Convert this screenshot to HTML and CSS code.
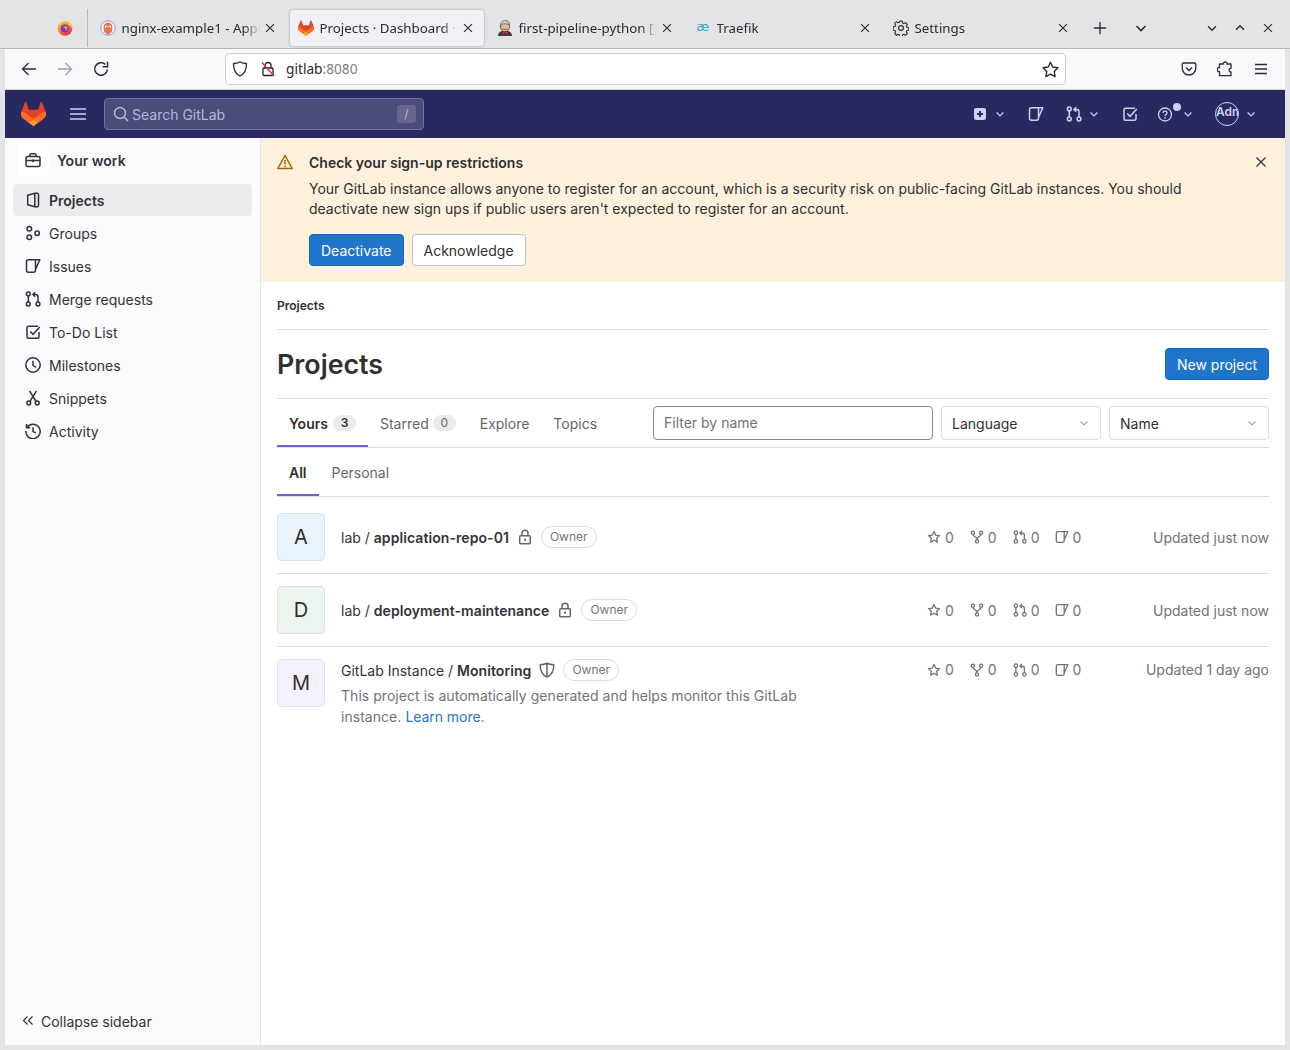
FILE: index.html
```html
<!DOCTYPE html>
<html>
	<head>
		<meta charset="utf-8">
		<title>Projects · Dashboard · GitLab</title>
		<link rel="stylesheet" href="styles.css">
	</head>
	<body>
		<svg class="icon-defs" width="0" height="0">
			<defs>
				<linearGradient id="fox" x1="0" y1="0" x2="0.6" y2="1">
					<stop offset="0" stop-color="#ffd53a"/>
					<stop offset=".5" stop-color="#ff8a2a"/>
					<stop offset="1" stop-color="#f0284f"/>
				</linearGradient>
			</defs>
			<symbol id="tanuki" viewBox="0 0 25 24">
				<path d="m24.507 9.5-.034-.09L21.082.562a.896.896 0 0 0-1.694.091l-2.29 7.01H7.825L5.535.653a.898.898 0 0 0-1.694-.09L.451 9.411.416 9.5a6.297 6.297 0 0 0 2.09 7.278l.012.01.03.022 5.16 3.867 2.56 1.935 1.554 1.176a1.051 1.051 0 0 0 1.268 0l1.555-1.176 2.56-1.935 5.197-3.89.014-.01A6.297 6.297 0 0 0 24.507 9.5Z" fill="#E24329"/>
				<path d="m24.507 9.5-.034-.09a11.44 11.44 0 0 0-4.56 2.051l-7.447 5.632 4.742 3.584 5.197-3.89.014-.01A6.297 6.297 0 0 0 24.507 9.5Z" fill="#FC6D26"/>
				<path d="m7.707 20.677 2.56 1.935 1.555 1.176a1.051 1.051 0 0 0 1.268 0l1.555-1.176 2.56-1.935-4.743-3.584-4.755 3.584Z" fill="#FCA326"/>
				<path d="M5.01 11.461a11.43 11.43 0 0 0-4.56-2.05L.416 9.5a6.297 6.297 0 0 0 2.09 7.278l.012.01.03.022 5.16 3.867 4.745-3.584-7.444-5.632Z" fill="#FC6D26"/>
			</symbol>
			<symbol id="i-close" viewBox="0 0 16 16"><path d="M3.500 3.500l9 9M12.500 3.500l-9 9" fill="none" stroke="currentColor" stroke-width="1.300"/></symbol>
			<symbol id="i-chevron" viewBox="0 0 16 16"><path d="M3.500 6l4.500 4.500L12.500 6" fill="none" stroke="currentColor" stroke-width="1.600"/></symbol>
			<symbol id="i-project" viewBox="0 0 16 16"><path d="M2.700 3.300L9.800 1.300h2.400c.8 0 1.300.5 1.300 1.300v10.800c0 .8-.5 1.300-1.300 1.300H9.800l-7.100-2zM9.800 1.300v13.400" fill="none" stroke="currentColor" stroke-width="1.500" stroke-linejoin="round"/></symbol>
			<symbol id="i-group" viewBox="0 0 16 16"><g fill="none" stroke="currentColor" stroke-width="1.500"><circle cx="4.300" cy="3.800" r="2.300"/><circle cx="4.300" cy="12.200" r="2.300"/><circle cx="12.200" cy="8.300" r="2.200"/></g></symbol>
			<symbol id="i-issue" viewBox="0 0 16 16"><path d="M3.300 1.800H14.800L10.500 11.500V12.200c0 1.200-.8 2-2 2H3.300c-1.200 0-1.800-.8-1.800-2V3.600c0-1.200.6-1.800 1.800-1.800zM10.500 1.800V11.500" fill="none" stroke="currentColor" stroke-width="1.500" stroke-linejoin="round"/></symbol>
			<symbol id="i-merge" viewBox="0 0 16 16"><g fill="none" stroke="currentColor" stroke-width="1.500"><circle cx="3.300" cy="3" r="1.900"/><circle cx="3.300" cy="13" r="1.900"/><circle cx="13" cy="13" r="1.900"/><path d="M3.300 4.900v6.200M13 11.100V6c0-1.500-.8-2.500-2.300-2.500H8M10.200 1.200L7.900 3.500l2.300 2.300"/></g></symbol>
			<symbol id="i-todo" viewBox="0 0 16 16"><path d="M14 8v4.700c0 .9-.6 1.500-1.500 1.500h-9c-.9 0-1.500-.6-1.500-1.500v-9C2 2.800 2.600 2.200 3.500 2.200H13M5.200 7.500L8 10.300l6.800-7.300" fill="none" stroke="currentColor" stroke-width="1.500"/></symbol>
			<symbol id="i-clock" viewBox="0 0 16 16"><g fill="none" stroke="currentColor" stroke-width="1.500"><circle cx="8" cy="8" r="7.200"/><path d="M8 3.800v4.500l3.200 2.200"/></g></symbol>
			<symbol id="i-snippet" viewBox="0 0 16 16"><g fill="none" stroke="currentColor" stroke-width="1.500"><circle cx="3.800" cy="13" r="1.900"/><circle cx="12.200" cy="13" r="1.900"/><path d="M4.900 11.500L11.500.8M11.100 11.500L4.500.8"/></g></symbol>
			<symbol id="i-history" viewBox="0 0 16 16"><g fill="none" stroke="currentColor" stroke-width="1.500"><path d="M2.200 4.200A7.200 7.200 0 1 1 .8 8M1.500 1v3.700h3.700M8 4.300v4l2.800 1.800"/></g></symbol>
			<symbol id="i-star" viewBox="0 0 16 16"><path d="M8 1.800l1.900 4 4.400.6-3.200 3 .8 4.400L8 11.700l-3.900 2.100.8-4.400-3.200-3 4.400-.6z" fill="none" stroke="currentColor" stroke-width="1.500" stroke-linejoin="round"/></symbol>
			<symbol id="i-fork" viewBox="0 0 16 16"><g fill="none" stroke="currentColor" stroke-width="1.500"><circle cx="3.300" cy="3" r="1.800"/><circle cx="12.700" cy="3" r="1.800"/><circle cx="8" cy="13" r="1.800"/><path d="M3.300 4.800c0 2.700 4.700 2.700 4.700 6.400M12.700 4.800c0 2.700-4.700 2.700-4.700 6.400"/></g></symbol>
			<symbol id="i-lock" viewBox="0 0 16 16"><g fill="none" stroke="currentColor" stroke-width="1.500"><rect x="2.700" y="6.700" width="10.600" height="8" rx="1"/><path d="M5 6.700V4.300a3 3 0 0 1 6 0v2.400"/></g><rect x="7" y="9.700" width="2" height="2" fill="currentColor"/></symbol>
			<symbol id="i-shield" viewBox="0 0 16 16"><path d="M8 1.200c2.200 1 4.400 1.500 6.800 1.500 0 6.300-1.900 10.300-6.800 12.300C3.100 13 1.200 9 1.200 2.700c2.400 0 4.600-.5 6.800-1.500zM8 1.200V15" fill="none" stroke="currentColor" stroke-width="1.500" stroke-linejoin="round"/></symbol>
		</svg>

		<div class="tabbar">
			<div class="pinned">
				<svg class="favicon" viewBox="0 0 16 16"><circle cx="8" cy="8.500" r="7.300" fill="url(#fox)"/><path d="M10 .5c3 1.500 5.500 4.500 5.300 8-1-2-2.500-3-4-3.500C11.500 3.500 11 2 10 .5z" fill="#ffce3a"/><circle cx="7.800" cy="8.500" r="4" fill="#6b3bd0"/><path d="M5.500 6.300h4.500c.8 1.800.3 4.400-2.300 4.800 1.200-.8 1-2.200.2-2.800z" fill="#ff9a2e"/></svg>
			</div>
			<div class="tab">
				<svg class="favicon" viewBox="0 0 16 16"><circle cx="8" cy="8" r="7.200" fill="#fff" stroke="#9a8fc0"/><path d="M3.500 7a4.500 4.500 0 0 1 9 0c0 2-.5 4-1 5.500L10 13l-.5 1.500H6.500L6 13l-1.500-.5C4 11 3.500 9 3.500 7z" fill="#ea7350"/><circle cx="6.200" cy="6.800" r="1.300" fill="#fff"/><circle cx="9.800" cy="6.800" r="1.300" fill="#fff"/><circle cx="6.400" cy="7" r=".6" fill="#333"/><circle cx="9.600" cy="7" r=".6" fill="#333"/></svg>
				<span class="tab-title">nginx-example1 - Applications</span>
				<svg class="tab-close"><use href="#i-close"/></svg>
			</div>
			<div class="tab tab-active">
				<svg class="favicon"><use href="#tanuki"/></svg>
				<span class="tab-title">Projects · Dashboard · GitLab</span>
				<svg class="tab-close"><use href="#i-close"/></svg>
			</div>
			<div class="tab">
				<svg class="favicon" viewBox="0 0 16 16"><path d="M1 16c0-3 2-4.500 4-5h6c2 .5 4 2 4 5z" fill="#3b3b45"/><path d="M5.500 11.500l2.500 1 2.500-1v2.500L8 13l-2.500 1z" fill="#d33"/><ellipse cx="8" cy="6.700" rx="4.500" ry="5" fill="#eab998" stroke="#4a4038" stroke-width=".8"/><path d="M3.300 6.500C3 2 6 .3 8.500.3s4.300 2.200 3.800 4.700C10 3.500 7 3.500 5 4.300z" fill="#c9c9c9" stroke="#4a4038" stroke-width=".6"/><path d="M5.500 8.800c1.500 1 3.500 1 5 0" fill="none" stroke="#7a4a38" stroke-width=".8"/></svg>
				<span class="tab-title">first-pipeline-python [Jenkins]</span>
				<svg class="tab-close"><use href="#i-close"/></svg>
			</div>
			<div class="tab">
				<span class="favicon traefik-icon">æ</span>
				<span class="tab-title">Traefik</span>
				<svg class="tab-close"><use href="#i-close"/></svg>
			</div>
			<div class="tab">
				<svg class="favicon" viewBox="0 0 16 16"><g fill="none" stroke="#333" stroke-width="1.200" stroke-linejoin="round"><path d="M6.700.8h2.600l.4 2 1.400.6 1.700-1.100 1.900 1.900-1.100 1.700.6 1.400 2 .4v2.600l-2 .4-.6 1.400 1.100 1.700-1.900 1.900-1.700-1.100-1.400.6-.4 2H6.700l-.4-2-1.400-.6-1.700 1.100-1.900-1.900 1.100-1.700-.6-1.400-2-.4V6.700l2-.4.6-1.400-1.100-1.700 1.900-1.900 1.700 1.100 1.400-.6z" transform="translate(.4 .4) scale(.95)"/><circle cx="8" cy="8" r="2.400"/></g></svg>
				<span class="tab-title">Settings</span>
				<svg class="tab-close"><use href="#i-close"/></svg>
			</div>
			<svg class="tab-new" viewBox="0 0 16 16"><path d="M8 1v14M1 8h14" stroke="currentColor" stroke-width="1.500"/></svg>
			<svg class="tab-list"><use href="#i-chevron"/></svg>
			<div class="window-controls">
				<svg><use href="#i-chevron"/></svg>
				<svg class="flip"><use href="#i-chevron"/></svg>
				<svg><use href="#i-close"/></svg>
			</div>
		</div>

		<div class="toolbar">
			<div class="nav-buttons">
				<svg viewBox="0 0 16 16"><path d="M15 8H1.500M7.500 2L1.500 8l6 6" fill="none" stroke="currentColor" stroke-width="1.300"/></svg>
				<svg class="nav-disabled" viewBox="0 0 16 16"><path d="M1 8h13.500M8.500 2l6 6-6 6" fill="none" stroke="currentColor" stroke-width="1.300"/></svg>
				<svg viewBox="0 0 16 16"><path d="M14.300 8.500A6.300 6.300 0 1 1 12.300 3.400M14.500 .8v5H9.500" fill="none" stroke="currentColor" stroke-width="1.500"/></svg>
			</div>
			<div class="urlbar">
				<svg class="url-icon" viewBox="0 0 16 16"><path d="M8 1c2.200 1 4.300 1.500 6.500 1.500C14.500 9 12.500 13 8 15 3.500 13 1.500 9 1.500 2.500 3.700 2.500 5.800 2 8 1z" fill="none" stroke="currentColor" stroke-width="1.300" stroke-linejoin="round"/></svg>
				<svg class="url-icon" viewBox="0 0 16 16"><g fill="none" stroke="#222" stroke-width="1.300"><rect x="3" y="7" width="10" height="7.500" rx="1"/><path d="M5 7V4.500a3 3 0 0 1 6 0V7"/></g><path d="M2 1.500l12 13.500" stroke="#e22850" stroke-width="1.400"/></svg>
				<span class="url-text">gitlab<span class="url-port">:8080</span></span>
				<svg class="url-star" viewBox="0 0 16 16"><path d="M8 1.200l2.100 4.500 4.900.7-3.500 3.400.8 4.900L8 12.400l-4.300 2.300.8-4.900L1 6.400l4.900-.7z" fill="none" stroke="currentColor" stroke-width="1.300" stroke-linejoin="round"/></svg>
			</div>
			<div class="toolbar-right">
				<svg viewBox="0 0 16 16"><path d="M2.500 2h11c.8 0 1.300.5 1.300 1.300V7c0 4-3 7-6.800 7S1.200 11 1.200 7V3.300c0-.8.5-1.300 1.300-1.300zM5 6.500l3 3 3-3" fill="none" stroke="currentColor" stroke-width="1.300"/></svg>
				<svg viewBox="0 0 16 16"><path d="M6.500 3.300C6 .6 10.500.6 10 3.300h4v4.400c-2.500-.5-2.500 4 0 3.500V15H2.500v-4H1c-.8-1.800-.8-3 0-4h1.500V3.300z" fill="none" stroke="currentColor" stroke-width="1.300" stroke-linejoin="round" transform="translate(0 -.3)"/></svg>
				<svg viewBox="0 0 16 16"><path d="M2 3.500h12M2 8h12M2 12.500h12" stroke="currentColor" stroke-width="1.300"/></svg>
			</div>
		</div>

		<header class="navbar">
			<svg class="nav-logo"><use href="#tanuki"/></svg>
			<svg class="nav-burger" viewBox="0 0 16 16"><path d="M0 3h16M0 8h16M0 13h16" stroke="currentColor" stroke-width="1.500"/></svg>
			<div class="nav-search">
				<svg class="search-icon" viewBox="0 0 16 16"><circle cx="7" cy="7" r="5.500" fill="none" stroke="currentColor" stroke-width="1.500"/><path d="M11 11l4 4" stroke="currentColor" stroke-width="1.500"/></svg>
				<span class="search-text">Search GitLab</span>
				<kbd class="search-key">/</kbd>
			</div>
			<div class="nav-actions">
				<span class="nav-action nav-new">
					<svg viewBox="0 0 16 16"><rect x="2" y="2" width="12" height="12" rx="2" fill="currentColor"/><path d="M8 5v6M5 8h6" stroke="#292961" stroke-width="2"/></svg>
					<svg class="nav-caret"><use href="#i-chevron"/></svg>
				</span>
				<span class="nav-action nav-issue"><svg><use href="#i-issue"/></svg></span>
				<span class="nav-action nav-mr">
					<svg><use href="#i-merge"/></svg>
					<svg class="nav-caret"><use href="#i-chevron"/></svg>
				</span>
				<span class="nav-action nav-todo"><svg><use href="#i-todo"/></svg></span>
				<span class="nav-action nav-help">
					<svg viewBox="0 0 16 16"><circle cx="8" cy="8.500" r="6.500" fill="none" stroke="currentColor" stroke-width="1.300"/><path d="M6 6.900C6 4.500 10 4.500 10 6.900c0 1.600-2 1.500-2 3" fill="none" stroke="currentColor" stroke-width="1.300"/><circle cx="8" cy="11.800" r=".9" fill="currentColor"/></svg>
					<i class="help-dot"></i>
					<svg class="nav-caret"><use href="#i-chevron"/></svg>
				</span>
				<span class="nav-action nav-user">
					<span class="nav-avatar">Adm</span>
					<svg class="nav-caret"><use href="#i-chevron"/></svg>
				</span>
			</div>
		</header>

		<div class="layout">
			<aside class="sidebar">
				<div class="context">
					<span class="context-icon">
						<svg viewBox="0 0 16 16"><g fill="none" stroke="currentColor" stroke-width="1.500"><rect x="1" y="4.500" width="14" height="10" rx="1.500"/><path d="M5 4.500V2.700c0-.6.400-1 1-1h4c.6 0 1 .4 1 1v1.800M1 8.500h14"/></g><rect x="7" y="7.500" width="2" height="2.500" fill="currentColor"/></svg>
					</span>
					Your work
				</div>
				<ul class="side-menu">
					<li class="side-item side-active"><svg><use href="#i-project"/></svg>Projects</li>
					<li class="side-item"><svg><use href="#i-group"/></svg>Groups</li>
					<li class="side-item"><svg><use href="#i-issue"/></svg>Issues</li>
					<li class="side-item"><svg><use href="#i-merge"/></svg>Merge requests</li>
					<li class="side-item"><svg><use href="#i-todo"/></svg>To-Do List</li>
					<li class="side-item"><svg><use href="#i-clock"/></svg>Milestones</li>
					<li class="side-item"><svg><use href="#i-snippet"/></svg>Snippets</li>
					<li class="side-item"><svg><use href="#i-history"/></svg>Activity</li>
				</ul>
				<div class="collapse">
					<svg viewBox="0 0 12 12"><path d="M5.500 1.500L1.500 5.500l4 4M10.500 1.500l-4 4 4 4" fill="none" stroke="currentColor" stroke-width="1.200"/></svg>
					Collapse sidebar
				</div>
			</aside>

			<main class="content">
				<section class="alert">
					<svg class="alert-icon" viewBox="0 0 16 16"><path d="M8 1.500L15.200 14.500H.8z" fill="none" stroke="currentColor" stroke-width="1.500" stroke-linejoin="round"/><path d="M8 6v4.500" stroke="currentColor" stroke-width="1.500"/><circle cx="8" cy="12.300" r=".9" fill="currentColor"/></svg>
					<div class="alert-body">
						<h4 class="alert-title">Check your sign-up restrictions</h4>
						<p class="alert-text">Your GitLab instance allows anyone to register for an account, which is a security risk on public-facing GitLab instances. You should deactivate new sign ups if public users aren't expected to register for an account.</p>
						<div class="alert-actions">
							<button class="btn btn-primary">Deactivate</button>
							<button class="btn btn-default">Acknowledge</button>
						</div>
					</div>
					<svg class="alert-close"><use href="#i-close"/></svg>
				</section>

				<div class="page">
					<div class="breadcrumb">Projects</div>
					<div class="page-head">
						<h1 class="page-title">Projects</h1>
						<button class="btn btn-primary">New project</button>
					</div>
					<div class="filter-row">
						<nav class="tabs">
							<a class="tab-link tab-link-active">Yours <span class="count">3</span></a>
							<a class="tab-link">Starred <span class="count">0</span></a>
							<a class="tab-link">Explore</a>
							<a class="tab-link">Topics</a>
						</nav>
						<div class="filters">
							<div class="filter-input">Filter by name</div>
							<div class="select">Language<svg><use href="#i-chevron"/></svg></div>
							<div class="select">Name<svg><use href="#i-chevron"/></svg></div>
						</div>
					</div>
					<nav class="tabs subtabs">
						<a class="tab-link tab-link-active">All</a>
						<a class="tab-link">Personal</a>
					</nav>

					<ul class="projects">
						<li class="project">
							<div class="avatar avatar-blue">A</div>
							<div class="project-main">
								<div class="project-name">
									<span>lab / <b>application-repo-01</b></span>
									<svg class="visibility"><use href="#i-lock"/></svg>
									<span class="role">Owner</span>
								</div>
							</div>
							<div class="stats">
								<span class="stat stat-star"><svg><use href="#i-star"/></svg>0</span>
								<span class="stat stat-fork"><svg><use href="#i-fork"/></svg>0</span>
								<span class="stat stat-mr"><svg><use href="#i-merge"/></svg>0</span>
								<span class="stat stat-issue"><svg><use href="#i-issue"/></svg>0</span>
							</div>
							<div class="updated">Updated just now</div>
						</li>
						<li class="project">
							<div class="avatar avatar-green">D</div>
							<div class="project-main">
								<div class="project-name">
									<span>lab / <b>deployment-maintenance</b></span>
									<svg class="visibility"><use href="#i-lock"/></svg>
									<span class="role">Owner</span>
								</div>
							</div>
							<div class="stats">
								<span class="stat stat-star"><svg><use href="#i-star"/></svg>0</span>
								<span class="stat stat-fork"><svg><use href="#i-fork"/></svg>0</span>
								<span class="stat stat-mr"><svg><use href="#i-merge"/></svg>0</span>
								<span class="stat stat-issue"><svg><use href="#i-issue"/></svg>0</span>
							</div>
							<div class="updated">Updated just now</div>
						</li>
						<li class="project project-top">
							<div class="avatar avatar-purple">M</div>
							<div class="project-main">
								<div class="project-name">
									<span>GitLab Instance / <b>Monitoring</b></span>
									<svg class="visibility"><use href="#i-shield"/></svg>
									<span class="role">Owner</span>
								</div>
								<p class="project-desc">This project is automatically generated and helps monitor this GitLab instance. <a class="learn-more">Learn more.</a></p>
							</div>
							<div class="stats">
								<span class="stat stat-star"><svg><use href="#i-star"/></svg>0</span>
								<span class="stat stat-fork"><svg><use href="#i-fork"/></svg>0</span>
								<span class="stat stat-mr"><svg><use href="#i-merge"/></svg>0</span>
								<span class="stat stat-issue"><svg><use href="#i-issue"/></svg>0</span>
							</div>
							<div class="updated">Updated 1 day ago</div>
						</li>
					</ul>
				</div>
			</main>
		</div>
	</body>
</html>
```

FILE: styles.css
```css
* {
	box-sizing: border-box;
}
html, body {
	height: 100%;
	margin: 0;
}
body {
	display: flex;
	flex-direction: column;
	padding: 0 5px 5px;
	background: #e3e4e6;
	font-family: Inter, sans-serif;
	font-size: 14px;
	color: #303030;
	overflow: hidden;
}
.icon-defs {
	position: absolute;
}
svg {
	display: block;
	flex: none;
}
ul {
	list-style: none;
	margin: 0;
	padding: 0;
}

/* browser tabs */
.tabbar {
	display: flex;
	align-items: center;
	height: 49px;
	margin: 0 -5px;
	padding-top: 8px;
	border-bottom: 1px solid #b6b6b8;
	font-family: "Noto Sans", sans-serif;
	font-size: 13.3px;
	color: #2b2a33;
}
.pinned {
	width: 88px;
	height: 38px;
	margin-top: -1px;
	padding: 11px 0 0 57px;
	border-right: 1px solid #b9b9bb;
}
.favicon {
	width: 16px;
	height: 16px;
}
.tab {
	display: flex;
	align-items: center;
	width: 198px;
	height: 36px;
	padding: 0 9px 0 12px;
	border-radius: 4px;
}
.tab-active {
	width: 194px;
	margin: 0 1px 0 4px;
	padding-left: 8px;
	background: #f0f1f4;
	box-shadow: 0 0 3px rgba(0, 0, 0, .3);
}
.tab-title {
	flex: 1;
	margin-left: 5.500px;
	overflow: hidden;
	white-space: nowrap;
	-webkit-mask-image: linear-gradient(to left, transparent 0, #000 16px);
	mask-image: linear-gradient(to left, transparent 0, #000 16px);
}
.tab-close {
	width: 14px;
	height: 14px;
	margin-left: 3px;
}
.traefik-icon {
	color: #37a4c9;
	font-family: "DejaVu Sans", sans-serif;
	font-size: 13px;
	line-height: 13px;
	text-align: center;
}
.tab-new {
	width: 14px;
	height: 14px;
	margin-left: 14px;
}
.tab-list {
	width: 16px;
	height: 16px;
	margin-left: 26px;
}
.window-controls {
	display: flex;
	gap: 14px;
	margin-left: auto;
	margin-right: 15px;
}
.window-controls svg {
	width: 14px;
	height: 14px;
}
.flip {
	transform: scaleY(-1);
}

/* browser toolbar */
.toolbar {
	display: flex;
	align-items: center;
	height: 41px;
	background: #f9f9fb;
	border-bottom: 1px solid #d4d4d8;
	color: #2b2a33;
}
.nav-buttons {
	display: flex;
	gap: 20px;
	width: 220px;
	padding-left: 16px;
}
.nav-buttons svg {
	width: 16px;
	height: 16px;
}
.nav-disabled {
	color: #a0a0a6;
}
.urlbar {
	display: flex;
	align-items: center;
	width: 841px;
	height: 32px;
	padding: 0 6px;
	background: #fff;
	border: 1px solid #cfcfd3;
	border-radius: 4px;
}
.url-icon {
	width: 16px;
	height: 16px;
	margin-right: 12px;
}
.url-text {
	margin-bottom: 2px;
	margin-left: -2px;
	font-family: "Noto Sans", sans-serif;
	font-size: 13.700px;
}
.url-port {
	color: #7d7d84;
}
.url-star {
	width: 17px;
	height: 17px;
	margin-left: auto;
}
.toolbar-right {
	display: flex;
	gap: 20px;
	margin-left: 115px;
}
.toolbar-right svg {
	width: 16px;
	height: 16px;
}

/* gitlab navbar */
.navbar {
	display: flex;
	align-items: center;
	flex: none;
	height: 48px;
	padding-left: 16px;
	background: #292961;
	color: #d1d0f0;
}
.nav-logo {
	width: 25px;
	height: 24px;
}
.nav-burger {
	width: 16px;
	height: 16px;
	margin-left: 24px;
}
.nav-search {
	display: flex;
	align-items: center;
	width: 320px;
	height: 32px;
	margin-left: 18px;
	padding: 0 7px 0 8px;
	background: #4b4b7c;
	border: 1px solid #7272a0;
	border-radius: 4px;
	color: #b7b7d8;
}
.search-icon {
	width: 16px;
	height: 16px;
}
.search-text {
	margin-left: 3px;
}
.search-key {
	width: 19px;
	height: 18px;
	margin-left: auto;
	background: #66668f;
	border-radius: 3px;
	font-family: Inter, sans-serif;
	font-size: 12px;
	line-height: 18px;
	text-align: center;
}
.nav-actions {
	display: flex;
	align-items: center;
	margin-left: auto;
	padding-right: 28px;
}
.nav-action {
	position: relative;
	display: flex;
	align-items: center;
}
.nav-action svg {
	width: 16px;
	height: 16px;
}
.nav-action .nav-caret {
	width: 12px;
	height: 12px;
	margin-left: 6px;
}
.nav-issue, .nav-mr, .nav-todo {
	margin-left: 22px;
}
.nav-help {
	margin-left: 19px;
}
.nav-help .nav-caret {
	margin-left: 9px;
}
.help-dot {
	position: absolute;
	top: -3px;
	left: 16px;
	width: 8px;
	height: 8px;
	background: #d1d0f0;
	border-radius: 50%;
}
.nav-user {
	margin-left: 21px;
}
.nav-avatar {
	width: 24px;
	height: 24px;
	overflow: hidden;
	border: 1px solid #d1d0f0;
	border-radius: 50%;
	font-size: 12px;
	font-weight: 600;
	line-height: 18px;
	white-space: nowrap;
}

/* page layout */
.layout {
	display: flex;
	flex: 1;
	min-height: 0;
	background: #fff;
}
.sidebar {
	display: flex;
	flex-direction: column;
	flex: none;
	width: 256px;
	padding: 6px 8px 0;
	background: #fbfafd;
	border-right: 1px solid #e6e6ea;
	color: #333238;
}
.context {
	display: flex;
	align-items: center;
	height: 32px;
	padding-left: 4px;
	font-weight: 600;
}
.context-icon {
	display: flex;
	align-items: center;
	justify-content: center;
	width: 32px;
	height: 32px;
	margin-right: 8px;
	background: #fff;
	border-radius: 4px;
}
.context-icon svg {
	width: 16px;
	height: 16px;
}
.side-menu {
	display: flex;
	flex-direction: column;
	gap: 1px;
	margin-top: 8px;
}
.side-item {
	display: flex;
	align-items: center;
	gap: 8px;
	height: 32px;
	padding-left: 12px;
	border-radius: 4px;
}
.side-item svg {
	width: 16px;
	height: 16px;
}
.side-active {
	background: #ececef;
	font-weight: 600;
}
.collapse {
	display: flex;
	align-items: center;
	gap: 7px;
	height: 48px;
	margin-top: auto;
	padding-left: 9px;
}
.collapse svg {
	width: 12px;
	height: 12px;
}

/* main content */
.content {
	flex: 1;
	min-width: 0;
}
.alert {
	display: flex;
	height: 144px;
	padding: 16px;
	background: #fdf1dd;
}
.alert-icon {
	width: 16px;
	height: 16px;
	color: #ab6100;
}
.alert-body {
	flex: 1;
	margin-left: 16px;
}
.alert-title {
	margin: 0 0 7px;
	font-size: 14px;
	font-weight: 600;
	line-height: 18px;
}
.alert-text {
	max-width: 900px;
	margin: 0;
	line-height: 20px;
}
.alert-actions {
	display: flex;
	gap: 8px;
	margin-top: 15px;
}
.alert-close {
	width: 16px;
	height: 16px;
	color: #333238;
}
.btn {
	height: 32px;
	padding: 0 11px;
	border-radius: 4px;
	font-family: Inter, sans-serif;
	font-size: 14px;
}
.btn-primary {
	background: #1f75cb;
	border: 1px solid #1068bf;
	color: #fff;
}
.btn-default {
	background: #fff;
	border: 1px solid #bfbfc3;
	color: #303030;
}
.page {
	padding: 0 16px;
}
.breadcrumb {
	height: 48px;
	border-bottom: 1px solid #dcdcde;
	font-size: 12px;
	font-weight: 600;
	line-height: 48px;
}
.page-head {
	display: flex;
	align-items: center;
	justify-content: space-between;
	height: 69px;
	border-bottom: 1px solid #dcdcde;
}
.page-title {
	margin: 0;
	font-size: 26.800px;
	font-weight: 600;
}
.filter-row {
	display: flex;
	justify-content: space-between;
	height: 49px;
	border-bottom: 1px solid #dcdcde;
}
.tabs {
	display: flex;
}
.tab-link {
	display: flex;
	align-items: center;
	gap: 4px;
	height: 48px;
	padding: 0 12px;
	color: #666;
}
.tab-link-active {
	box-shadow: inset 0 -2px 0 #6666c4;
	color: #303030;
	font-weight: 600;
}
.tab-link-active .count {
	margin-left: 1px;
}
.count {
	min-width: 23px;
	padding: 0 7px;
	background: #ececef;
	border-radius: 10px;
	font-size: 12px;
	line-height: 16px;
	text-align: center;
}
.filters {
	display: flex;
	gap: 8px;
	padding-top: 7px;
}
.filter-input {
	width: 280px;
	height: 34px;
	padding: 0 10px;
	border: 1px solid #89888d;
	border-radius: 4px;
	color: #737278;
	line-height: 32px;
}
.select {
	display: flex;
	align-items: center;
	justify-content: space-between;
	width: 160px;
	height: 34px;
	padding: 0 10px;
	border: 1px solid #dcdcde;
	border-radius: 4px;
}
.select svg {
	width: 12px;
	height: 12px;
	color: #a4a3a8;
}
.subtabs {
	height: 49px;
	border-bottom: 1px solid #dcdcde;
}
.subtabs .tab-link-active {
	margin-right: 1px;
}
.project {
	display: flex;
	align-items: center;
	padding: 12px 0;
	border-bottom: 1px solid #dcdcde;
}
.project:first-child {
	padding-top: 16px;
}
.project-top {
	align-items: flex-start;
	border-bottom: 0;
}
.avatar {
	flex: none;
	width: 48px;
	height: 48px;
	border: 1px solid rgba(31, 30, 36, .08);
	border-radius: 5px;
	font-size: 20px;
	line-height: 46px;
	text-align: center;
}
.avatar-blue {
	background: #e9f3fc;
}
.avatar-green {
	background: #ecf4ee;
}
.avatar-purple {
	background: #f4f0ff;
}
.project-main {
	flex: 1;
	margin-left: 16px;
}
.project-name {
	display: flex;
	align-items: center;
	color: #333238;
}
.project-name b {
	font-weight: 600;
	letter-spacing: .07px;
}
.visibility {
	width: 16px;
	height: 16px;
	margin-left: 8px;
	color: #666;
}
.role {
	height: 22px;
	margin-left: 8px;
	padding: 0 8px;
	border: 1px solid #dcdcde;
	border-radius: 11px;
	color: #737278;
	font-size: 12px;
	line-height: 20px;
}
.project-desc {
	width: 470px;
	margin: 4px 0 0;
	color: #737278;
	letter-spacing: .04px;
	line-height: 21px;
}
.learn-more {
	color: #1f75cb;
	letter-spacing: -.05px;
}
.stats {
	display: flex;
	width: 155px;
	color: #737278;
}
.project-top .stats, .project-top .updated {
	margin-top: 2px;
}
.stat {
	display: flex;
	align-items: center;
	gap: 4px;
}
.stat svg {
	width: 14px;
	height: 14px;
}
.stat-fork, .stat-mr {
	margin-left: 16px;
}
.stat-issue {
	margin-left: 15px;
}
.updated {
	width: 187px;
	color: #737278;
	text-align: right;
}
```
